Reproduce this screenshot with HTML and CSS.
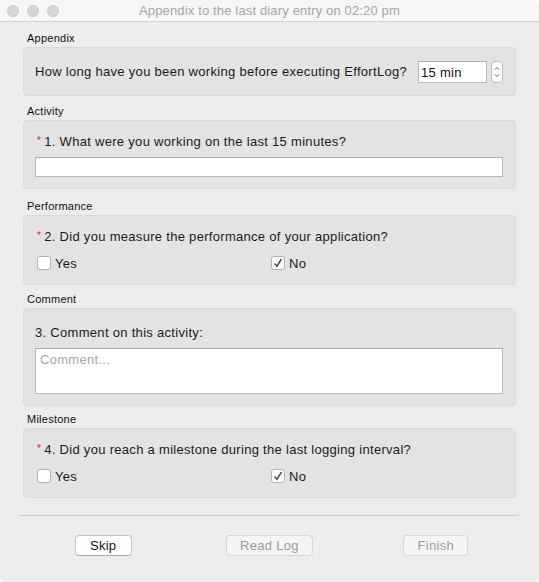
FILE: index.html
```html
<!DOCTYPE html>
<html>
<head>
<meta charset="utf-8">
<link rel="stylesheet" href="styles.css">
</head>
<body>
<div class="window">
  <div class="titlebar">
    <div class="lights"><span class="light"></span><span class="light"></span><span class="light"></span></div>
    <div class="title">Appendix to the last diary entry on 02:20 pm</div>
    <div></div>
  </div>
  <div class="content">
    <section class="section">
      <div class="section-label">Appendix</div>
      <div class="group group-row">
        <div class="row">
          <span class="q">How long have you been working before executing EffortLog?</span>
          <div class="spin">
            <input class="spin-input" type="text" value="15 min">
            <span class="stepper">
              <svg width="12" height="22" viewBox="0 0 12 22"><path d="M4 8.5 L6 6.5 L8 8.5" fill="none" stroke="#555" stroke-width="1"/><path d="M4 13.5 L6 15.5 L8 13.5" fill="none" stroke="#555" stroke-width="1"/></svg>
            </span>
          </div>
        </div>
      </div>
    </section>
    <section class="section">
      <div class="section-label">Activity</div>
      <div class="group">
        <div class="q"><span class="req">*</span>1. What were you working on the last 15 minutes?</div>
        <input class="line-input" type="text">
      </div>
    </section>
    <section class="section section-perf">
      <div class="section-label">Performance</div>
      <div class="group group-pad">
        <div class="q"><span class="req">*</span>2. Did you measure the performance of your application?</div>
        <div class="choices">
          <label class="choice"><span class="box"></span>Yes</label>
          <label class="choice"><span class="box"><svg width="14" height="14" viewBox="0 0 14 14"><path d="M3.5 7.5 L6 10.2 L10.5 3" fill="none" stroke="#4a4a4a" stroke-width="1.5"/></svg></span>No</label>
        </div>
      </div>
    </section>
    <section class="section section-comment">
      <div class="section-label">Comment</div>
      <div class="group group-tall">
        <div class="q">3. Comment on this activity:</div>
        <textarea class="comment" placeholder="Comment..."></textarea>
      </div>
    </section>
    <section class="section section-tight">
      <div class="section-label">Milestone</div>
      <div class="group group-pad">
        <div class="q"><span class="req">*</span>4. Did you reach a milestone during the last logging interval?</div>
        <div class="choices">
          <label class="choice"><span class="box"></span>Yes</label>
          <label class="choice"><span class="box"><svg width="14" height="14" viewBox="0 0 14 14"><path d="M3.5 7.5 L6 10.2 L10.5 3" fill="none" stroke="#4a4a4a" stroke-width="1.5"/></svg></span>No</label>
        </div>
      </div>
    </section>
  </div>
  <div class="footer">
    <div class="buttons">
      <div class="cell"><button class="btn btn-skip">Skip</button></div>
      <div class="cell"><button class="btn btn-read" disabled>Read Log</button></div>
      <div class="cell"><button class="btn btn-finish" disabled>Finish</button></div>
    </div>
  </div>
</div>
</body>
</html>
```
FILE: styles.css
```css
* { box-sizing: border-box; }
html, body { margin: 0; padding: 0; background: #ffffff; }
body {
  font-family: "Liberation Sans", Arial, sans-serif;
  color: #1b1b1b;
}
.window {
  width: 539px;
  height: 582px;
  background: #ececec;
  border-radius: 5px;
  overflow: hidden;
}
.titlebar {
  height: 22px;
  background: #f6f6f6;
  border-bottom: 1px solid #d4d4d4;
  display: grid;
  grid-template-columns: 1fr auto 1fr;
  align-items: center;
}
.lights {
  display: flex;
  gap: 8px;
  padding-left: 7px;
}
.light {
  width: 12px;
  height: 12px;
  border-radius: 50%;
  background: #d6d6d6;
  border: 1px solid #cbcbcb;
}
.title {
  font-size: 13px;
  letter-spacing: 0.15px;
  color: #a6a6a6;
  line-height: 16px;
}
.content {
  padding: 9px 23px 0;
}
.section + .section { margin-top: 8px; }
.section.section-perf { margin-top: 10px; }
.section.section-comment { margin-top: 7px; }
.section.section-tight { margin-top: 6px; }
.section-label {
  font-size: 11px;
  letter-spacing: 0.25px;
  line-height: 14px;
  padding-left: 4px;
  margin-bottom: 2px;
  color: #111;
}
.group {
  background: #e3e3e3;
  border: 1px solid #dadada;
  border-radius: 4px;
  padding: 13px 12px 11px 11px;
}
.group-row { padding: 13px 12px 12px 11px; }
.group-pad { padding-bottom: 12px; }
.group-tall { padding-top: 16px; }
.row {
  display: flex;
  align-items: center;
  height: 22px;
}
.q {
  font-size: 13px;
  letter-spacing: 0.3px;
  line-height: 16px;
  color: #1b1b1b;
}
.req {
  color: #e0261f;
  font-size: 10px;
  line-height: 0;
  position: relative;
  top: -2px;
  margin: 0 3px 0 2px;
}
.spin {
  margin-left: auto;
  display: flex;
  align-items: center;
  gap: 4px;
}
.spin-input {
  width: 69px;
  height: 22px;
  border: 1px solid #b9b9b9;
  border-top-color: #adadad;
  background: #fff;
  font-family: "Liberation Sans", Arial, sans-serif;
  font-size: 13px;
  letter-spacing: 0.3px;
  color: #111;
  padding: 0 2px;
  margin: 0;
  outline: none;
}
.stepper {
  width: 12px;
  height: 22px;
  display: block;
  background: #fff;
  border: 1px solid #bdbdbd;
  border-radius: 4px;
  overflow: hidden;
}
.stepper svg { display: block; margin: -1px 0 0 -1px; }
.line-input {
  display: block;
  width: 100%;
  height: 20px;
  margin: 7px 0 0;
  border: 1px solid #b9b9b9;
  border-top-color: #adadad;
  background: #fff;
  outline: none;
  padding: 0 3px;
}
.choices {
  display: grid;
  grid-template-columns: 1fr 1fr;
  margin-top: 9px;
  height: 18px;
}
.choice {
  display: flex;
  align-items: center;
  gap: 4px;
  padding-left: 2px;
  font-size: 13px;
  letter-spacing: 0.3px;
  color: #1b1b1b;
}
.box {
  width: 14px;
  height: 14px;
  background: #fff;
  border: 1px solid #b3b3b3;
  border-radius: 3px;
  display: block;
  overflow: hidden;
}
.box svg { display: block; margin: -1px 0 0 -1px; }
.comment {
  display: block;
  width: 100%;
  height: 46px;
  margin: 7px 0 0;
  border: 1px solid #b9b9b9;
  border-top-color: #adadad;
  background: #fff;
  resize: none;
  outline: none;
  font-family: "Liberation Sans", Arial, sans-serif;
  font-size: 13px;
  letter-spacing: 0.3px;
  padding: 3px 4px;
}
.comment::placeholder { color: #a8a8a8; }
.footer {
  padding: 17px 20px 0;
}
.buttons {
  border-top: 1px solid #cacaca;
  padding-top: 19px;
  display: grid;
  grid-template-columns: 1fr 1fr 1fr;
}
.cell { display: flex; justify-content: center; }
.btn {
  height: 21px;
  font-family: "Liberation Sans", Arial, sans-serif;
  font-size: 13px;
  letter-spacing: 0.3px;
  line-height: 19px;
  padding: 0;
  background: #fff;
  color: #111;
  border: 1px solid #c6c6c6;
  border-bottom-color: #adadad;
  border-radius: 4px;
}
.btn:disabled {
  background: #f4f4f4;
  color: #9d9d9d;
  border-color: #d6d6d6;
}
.btn-skip { width: 57px; }
.btn-read { width: 87px; }
.btn-finish { width: 65px; }
```
